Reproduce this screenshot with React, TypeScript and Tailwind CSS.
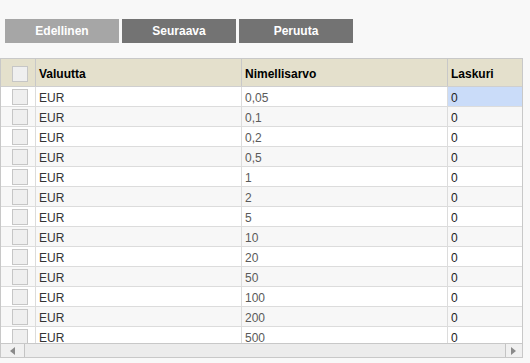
const rows = ["0,05", "0,1", "0,2", "0,5", "1", "2", "5", "10", "20", "50", "100", "200", "500"];

function Box() {
  return <div className="w-4 h-4 border border-[#c6c6c6] bg-[#efefef]" />;
}

export default function App() {
  return (
    <div className="w-[530px] h-[363px] bg-[#f8f8f8] overflow-hidden font-['Liberation_Sans',Arial,sans-serif] text-[12px]">
      <div className="flex gap-[3px] pl-[5px] pt-[19px]">
        <button className="w-[114px] h-6 bg-[#a6a6a6] text-white font-bold">Edellinen</button>
        <button className="w-[114px] h-6 bg-[#737373] text-white font-bold">Seuraava</button>
        <button className="w-[114px] h-6 bg-[#737373] text-white font-bold">Peruuta</button>
      </div>

      <div className="mt-[15px] w-[523px] h-[300px] border border-[#c8c8c8] bg-white flex flex-col">
        <div className="h-[284px] overflow-hidden">
          <div className="flex h-[28px] bg-[#e4e0cc] border-b border-[#cfcfcf] text-black font-bold">
            <div className="w-[35px] border-r border-[#c8c8c8] flex items-center pl-[11px] pt-[3px]">
              <Box />
            </div>
            <div className="w-[206px] border-r border-[#c8c8c8] flex items-center pl-[3px] pt-[3px]">Valuutta</div>
            <div className="w-[206px] border-r border-[#c8c8c8] flex items-center pl-[3px] pt-[3px]">Nimellisarvo</div>
            <div className="w-[74px] flex items-center pl-[3px] pt-[3px]">Laskuri</div>
          </div>
          {rows.map((v, i) => (
            <div
              key={v}
              className={`flex h-[20px] border-b border-[#dcdcdc] ${i % 2 === 0 ? "bg-white" : "bg-[#f7f7f7]"}`}
            >
              <div className="w-[35px] border-r border-[#dcdcdc] flex items-center pl-[11px] pt-[1px]">
                <Box />
              </div>
              <div className="w-[206px] border-r border-[#dcdcdc] flex items-center pl-[3px] pt-[2px] text-[#333]">EUR</div>
              <div className="w-[206px] border-r border-[#dcdcdc] flex items-center pl-[3px] pt-[2px] text-[#5a5a5a]">{v}</div>
              <div
                className={`w-[74px] flex items-center pl-[3px] pt-[2px] text-[#222] ${i === 0 ? "bg-[#cadcf9]" : ""}`}
              >
                0
              </div>
            </div>
          ))}
        </div>
        <div className="flex h-[14px] bg-[#f0f0f0] border-t border-[#c8c8c8]">
          <div className="w-[23px] flex items-center pl-[9px]">
            <svg width="5" height="8" viewBox="0 0 5 8">
              <path d="M5 0 L0 4 L5 8 Z" fill="#8a8a8a" />
            </svg>
          </div>
          <div className="w-[482px] bg-[#ececec] border-l border-r border-[#c4c4c4]" />
          <div className="flex-1 flex items-center pl-[5px]">
            <svg width="5" height="8" viewBox="0 0 5 8">
              <path d="M0 0 L5 4 L0 8 Z" fill="#8a8a8a" />
            </svg>
          </div>
        </div>
      </div>
    </div>
  );
}
